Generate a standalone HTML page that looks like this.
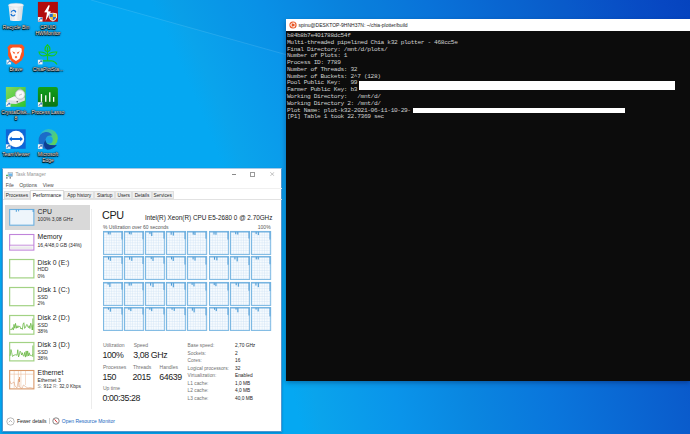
<!DOCTYPE html>
<html><head><meta charset="utf-8">
<style>
*{margin:0;padding:0;box-sizing:border-box}
html,body{width:690px;height:434px;overflow:hidden}
body{position:relative;font-family:"Liberation Sans",sans-serif;
background:radial-gradient(circle farthest-corner at -1592px 856px,#06aaf2 0px,#05a8f2 1941px,#0aa4ec 1961px,#0a94ea 2041px,#0a86e0 2111px,#0a76dc 2191px,#0a5ccc 2320px,#0848c4 2410px,#0644c0 2440px,#0644c0 2700px);}
.a{position:absolute}
.t{position:absolute;white-space:nowrap;line-height:10px}
.tab{background:#f0f0f0;border:0.6px solid #e0e0e0}
.lbl{position:absolute;white-space:nowrap;color:#f4f4f4;font-size:5.0px;text-shadow:0 0.5px 0.5px #000,0 0 0.6px #000,0 0 0.9px #000,0 0 1.2px #000,0 0.6px 1.8px #000;text-align:center;width:34px;line-height:6px}
.mono{position:absolute;font-family:"Liberation Mono",monospace;font-size:6.2px;line-height:6.78px;letter-spacing:-0.37px;color:#d0d0d0;white-space:pre}
</style></head><body>
<div class="a" style="left:0;top:0;width:690px;height:434px"><svg width="690" height="434"><polygon points="0,0 91,0 690,167.7 690,0" fill="rgba(0,40,160,0.04)"/><line x1="91" y1="0" x2="286" y2="54.6" stroke="rgba(200,240,255,0.16)" stroke-width="0.9"/></svg></div>
<svg class="a" style="left:0;top:0" width="70" height="170" viewBox="0 0 70 170">
<defs>
<linearGradient id="cdm" x1="0" y1="0" x2="1" y2="1"><stop offset="0" stop-color="#86d85e"/><stop offset="1" stop-color="#2ec42e"/></linearGradient>
<linearGradient id="pl" x1="0" y1="0" x2="0" y2="1"><stop offset="0" stop-color="#12a01c"/><stop offset="1" stop-color="#0b7412"/></linearGradient>
<linearGradient id="edA" x1="0" y1="0.2" x2="1" y2="0.6"><stop offset="0" stop-color="#2ab4d8"/><stop offset="0.55" stop-color="#3cc4a8"/><stop offset="1" stop-color="#68d448"/></linearGradient>

</defs>
<!-- recycle bin -->
<linearGradient id="rb" x1="0" y1="0" x2="1" y2="0"><stop offset="0" stop-color="#dfe6ec"/><stop offset="0.5" stop-color="#f4f7f9"/><stop offset="1" stop-color="#cfd8df"/></linearGradient>
<path d="M8.5 5.2 L23.4 5.2 L21.6 20.6 Q16 21.6 10.2 20.6 Z" fill="url(#rb)"/>
<ellipse cx="16" cy="5.2" rx="7.6" ry="1.9" fill="#f2f5f7" stroke="#c9d2d9" stroke-width="0.4"/>
<path d="M10.5 8.5 L11.6 19.5 M13.5 8.5 L14 20 M18.5 8.5 L18 20 M21.5 8.5 L20.4 19.5" stroke="#d4dbe1" stroke-width="0.45"/>
<path d="M11.2 12.3 A2.4 2.4 0 0 1 15.6 11.6" fill="none" stroke="#1a74d4" stroke-width="1.1"/>
<path d="M15.2 14.6 A2.4 2.4 0 0 1 11 14.6" fill="none" stroke="#1a74d4" stroke-width="1.1"/>
<path d="M14.2 10.6 L16.4 11.2 L15.4 13 Z M12 15.8 L10.2 14.6 L12.2 13.6 Z" fill="#1a74d4"/>
<!-- HWMonitor -->
<rect x="37.9" y="1.9" width="20" height="19.8" fill="#b20b0b"/>
<path d="M48.5 5.2 L44.2 12.3 L47 12.6 L45.6 20.8 L51 11.4 L48.1 11.2 L49.8 5.5 Z" fill="#fff"/>
<path d="M48.8 13.5 Q52.9 12.2 57 13.5 L57 17.5 Q56 20.5 52.9 21.4 Q49.8 20.5 48.8 17.5 Z" fill="#f0f0f0"/>
<path d="M49.6 14.2 L52.9 13.4 L52.9 17 L49.6 17 Z" fill="#2d6cc8"/>
<path d="M52.9 13.4 L56.2 14.2 L56.2 17 L52.9 17 Z" fill="#f2c230"/>
<path d="M49.6 17 L52.9 17 L52.9 20.6 Q50.3 19.6 49.6 17.5 Z" fill="#f2c230"/>
<path d="M52.9 17 L56.2 17 Q55.5 19.6 52.9 20.6 Z" fill="#2d6cc8"/>
<g transform="translate(37.9,17)"><rect x="0" y="0" width="4.6" height="4.6" fill="#f4f4f4"/><path d="M1 3.8 Q1.2 1.8 3.3 1.6 L2.7 0.9 L3.9 0.9 L3.9 2.2 L3.3 1.7" fill="none" stroke="#1f5fb4" stroke-width="0.8"/></g>
<!-- Brave -->
<path d="M10 44.4 L22 44.4 L23.4 46 L24.6 47.6 L23.8 50.5 L24 55.5 L21.5 60.5 L16 64.4 L10.5 60.5 L8 55.5 L8.2 50.5 L7.4 47.6 L8.6 46 Z" fill="#fb5420"/>
<path d="M10.4 48.6 L12.6 47.4 L19.4 47.4 L21.6 48.6 L21.8 51.5 L20.6 55 L19.5 58.8 L16 61 L12.5 58.8 L11.4 55 L10.2 51.5 Z" fill="#fff"/>
<path d="M12.2 51.2 L15 52.4 L14.2 54.2 Z M19.8 51.2 L17 52.4 L17.8 54.2 Z" fill="#fb5420"/>
<path d="M14.6 57 L16 55.8 L17.4 57 L16 58.6 Z" fill="#fb5420"/>
<path d="M16 48 L16 55" stroke="#fde0d4" stroke-width="0.5"/>
<g transform="translate(6.5,59.8)"><rect x="0" y="0" width="4.6" height="4.6" fill="#f4f4f4"/><path d="M1 3.8 Q1.2 1.8 3.3 1.6 L2.7 0.9 L3.9 0.9 L3.9 2.2 L3.3 1.7" fill="none" stroke="#1f5fb4" stroke-width="0.8"/></g>
<!-- Chia -->
<g fill="none" stroke="#19c81d" stroke-width="1.15">
<path d="M47.5 44.8 Q50 47 50 49.2 Q50 51.4 47.5 51.4 Q45 51.4 45 49.2 Q45 47 47.5 44.8 Z"/>
<path d="M47.5 46.8 L47.5 60.8"/>
<path d="M47 55.4 Q45.5 51.6 39 52 Q39.5 57.2 47 55.4 Z"/>
<path d="M48 55.4 Q49.5 51.6 56.8 52 Q56 57.2 48 55.4 Z"/>
<path d="M42.3 60.8 L51.5 60.8 Q55.5 61.5 57 64.6"/>
</g>
<g transform="translate(37.9,59.8)"><rect x="0" y="0" width="4.6" height="4.6" fill="#f4f4f4"/><path d="M1 3.8 Q1.2 1.8 3.3 1.6 L2.7 0.9 L3.9 0.9 L3.9 2.2 L3.3 1.7" fill="none" stroke="#1f5fb4" stroke-width="0.8"/></g>
<!-- CrystalDiskMark -->
<rect x="5.9" y="87" width="19.8" height="19.8" fill="url(#cdm)"/>
<path d="M6.6 100 L14 96.5 L24.9 97.5 L24.9 100.5 L16 104 L6.6 103.6 Z" fill="#dcdfe2"/>
<path d="M6.6 100 L14 96.5 L24.9 97.5 L16 100.8 Z" fill="#f4f5f6"/>
<circle cx="20.1" cy="94.5" r="4.9" fill="#e6e8ea" stroke="#9aa0a6" stroke-width="0.5"/>
<circle cx="20.1" cy="94.5" r="3.6" fill="#f8f9fa"/>
<path d="M19 95.3 L22 94" stroke="#777" stroke-width="0.4"/>
<rect x="19.4" y="88.6" width="1.3" height="1.2" fill="#b8bcc0"/>
<circle cx="17.2" cy="101.8" r="0.7" fill="#333"/>
<g transform="translate(5.9,102.2)"><rect x="0" y="0" width="4.6" height="4.6" fill="#f4f4f4"/><path d="M1 3.8 Q1.2 1.8 3.3 1.6 L2.7 0.9 L3.9 0.9 L3.9 2.2 L3.3 1.7" fill="none" stroke="#1f5fb4" stroke-width="0.8"/></g>
<!-- Process Lasso -->
<rect x="37.9" y="87" width="20" height="19.8" rx="2" fill="url(#pl)"/>
<rect x="40.8" y="94" width="1.3" height="7.8" fill="#fff"/>
<rect x="45.1" y="95.3" width="1.3" height="6.5" fill="#fff"/>
<rect x="49.1" y="92.3" width="1.3" height="9.5" fill="#fff"/>
<rect x="53" y="97" width="1.3" height="4.8" fill="#fff"/>
<g transform="translate(37.9,102.2)"><rect x="0" y="0" width="4.6" height="4.6" fill="#f4f4f4"/><path d="M1 3.8 Q1.2 1.8 3.3 1.6 L2.7 0.9 L3.9 0.9 L3.9 2.2 L3.3 1.7" fill="none" stroke="#1f5fb4" stroke-width="0.8"/></g>
<!-- TeamViewer -->
<rect x="5.9" y="129.3" width="19.8" height="19.5" fill="#0f66d6"/>
<circle cx="16" cy="139" r="8.2" fill="#fff"/>
<path d="M9 139 L11.8 136.6 L11.8 138 L20.2 138 L20.2 136.6 L23 139 L20.2 141.4 L20.2 140 L11.8 140 L11.8 141.4 Z" fill="#0f66d6"/>
<g transform="translate(5.9,144.3)"><rect x="0" y="0" width="4.6" height="4.6" fill="#f4f4f4"/><path d="M1 3.8 Q1.2 1.8 3.3 1.6 L2.7 0.9 L3.9 0.9 L3.9 2.2 L3.3 1.7" fill="none" stroke="#1f5fb4" stroke-width="0.8"/></g>
<!-- Edge -->
<circle cx="48.6" cy="138.2" r="9.2" fill="url(#edA)"/>
<circle cx="49.2" cy="139.8" r="3.6" fill="#1aa2e6"/>
<path d="M38.6 141.5 Q38.4 132.8 45.5 132 Q50.5 131.6 52 135.6 Q46.2 135 45.5 140 Q45.6 146.4 56.8 145 Q53 149.6 47.2 149.4 Q39 148.6 38.6 141.5 Z" fill="#1b6cc9"/>
<path d="M45.5 140 Q45.6 146.4 56.8 145 Q53 149.6 47.2 149.4 Q43.6 148 44 143 Z" fill="#0d3f92"/>
<g transform="translate(37.9,144.3)"><rect x="0" y="0" width="4.6" height="4.6" fill="#f4f4f4"/><path d="M1 3.8 Q1.2 1.8 3.3 1.6 L2.7 0.9 L3.9 0.9 L3.9 2.2 L3.3 1.7" fill="none" stroke="#1f5fb4" stroke-width="0.8"/></g>
</svg>

<div class="lbl" style="left:-1px;top:24px">Recycle Bin</div>
<div class="lbl" style="left:31px;top:24px">CPUID<br>HWMonitor</div>
<div class="lbl" style="left:-1px;top:66px">Brave</div>
<div class="lbl" style="left:31px;top:66px">ChiaPlotSta...</div>
<div class="lbl" style="left:-1px;top:109px">CrystalDisk...<br>8</div>
<div class="lbl" style="left:31px;top:109px">Process Lasso</div>
<div class="lbl" style="left:-1px;top:151px">TeamViewer</div>
<div class="lbl" style="left:31px;top:151px">Microsoft<br>Edge</div>
<div class="a" style="left:286px;top:18.6px;width:404px;height:362.3px;background:#0c0c0c;box-shadow:0 1.5px 5px rgba(0,0,40,0.35)"></div>
<div class="a" style="left:286px;top:18.6px;width:404px;height:12.8px;background:#fff"></div>
<svg class="a" style="left:289px;top:21px" width="8" height="8" viewBox="0 0 8 8"><circle cx="4" cy="4" r="3.6" fill="#e95420"/><circle cx="4" cy="4" r="2.1" fill="none" stroke="#fff" stroke-width="0.8"/><circle cx="2" cy="4" r="0.7" fill="#fff"/><circle cx="5" cy="2.3" r="0.7" fill="#fff"/><circle cx="5" cy="5.7" r="0.7" fill="#fff"/></svg>
<div class="t" style="left:298.6px;top:20.00px;font-size:5.0px;color:#1a1a1a;">spinu@DESKTOP-9HNH37N: ~/chia-plotter/build</div>
<div class="mono" style="left:287px;top:33.0px">b84b8b7e401788dc54f
Multi-threaded pipelined Chia k32 plotter - 468cc5e
Final Directory: /mnt/d/plots/
Number of Plots: 1
Process ID: 7789
Number of Threads: 32
Number of Buckets: 2^7 (128)
Pool Public Key:   99
Farmer Public Key: b3
Working Directory:   /mnt/d/
Working Directory 2: /mnt/d/
Plot Name: plot-k32-2021-06-11-10-29-
[P1] Table 1 took 22.7369 sec</div>
<div class="a" style="left:359.2px;top:81.3px;width:316px;height:8.8px;background:#fff"></div>
<div class="a" style="left:413.2px;top:108.2px;width:212px;height:4.5px;background:#fff"></div>
<div class="a" style="left:2.4px;top:167.6px;width:280px;height:264.4px;background:#fff;border:0.7px solid #4f96cf;border-top:0.8px solid #a9c9e6;box-shadow:0 1px 2px rgba(0,50,110,0.35)"></div>
<svg class="a" style="left:5px;top:171.5px" width="9" height="8" viewBox="0 0 9 8"><rect x="3.1" y="0.7" width="4.6" height="4" fill="#cfe6f7" stroke="#9aa0a6" stroke-width="0.5"/><rect x="3.6" y="1.6" width="3.6" height="2.4" fill="#6fb6ea"/><rect x="1" y="2.8" width="2.2" height="1.1" fill="#4ea84e"/><rect x="1.1" y="4.7" width="1.5" height="2" fill="#8c9297"/><rect x="4.5" y="4.7" width="1.5" height="2" fill="#8c9297"/></svg>
<div class="t" style="left:15.4px;top:170.00px;font-size:4.85px;color:#959595;">Task Manager</div>
<div class="a" style="left:231.6px;top:174.3px;width:4.4px;height:0.55px;background:#8a8a8a"></div>
<div class="a" style="left:250.3px;top:172.4px;width:4.6px;height:4.3px;border:0.55px solid #9a9a9a"></div>
<svg class="a" style="left:270px;top:172.3px" width="4.5" height="4.2" viewBox="0 0 4.5 4.2"><path d="M0.2 0.2L4.3 4M4.3 0.2L0.2 4" stroke="#8a8a8a" stroke-width="0.5"/></svg>
<div class="t" style="left:5.8px;top:180.20px;font-size:5.0px;color:#4a4a4a;">File</div>
<div class="t" style="left:19.3px;top:180.20px;font-size:5.2px;color:#4a4a4a;">Options</div>
<div class="t" style="left:42.8px;top:180.20px;font-size:5.0px;color:#4a4a4a;">View</div>
<div class="a" style="left:3px;top:188.3px;width:279px;height:0.8px;background:#f0f0f0"></div>
<div class="a" style="left:3px;top:198.9px;width:279px;height:0.7px;background:#e2e2e2"></div>
<div class="a tab" style="left:4.0px;top:191.3px;width:25.8px;height:8.2px"></div>
<div class="t" style="left:4.0px;top:191.40px;font-size:4.8px;color:#262626;width:25.8px;text-align:center">Processes</div>
<div class="a tab" style="left:64.2px;top:191.3px;width:30.0px;height:8.2px"></div>
<div class="t" style="left:64.2px;top:191.40px;font-size:4.8px;color:#262626;width:30.0px;text-align:center">App history</div>
<div class="a tab" style="left:94.2px;top:191.3px;width:21.0px;height:8.2px"></div>
<div class="t" style="left:94.2px;top:191.40px;font-size:4.8px;color:#262626;width:21.0px;text-align:center">Startup</div>
<div class="a tab" style="left:115.2px;top:191.3px;width:17.0px;height:8.2px"></div>
<div class="t" style="left:115.2px;top:191.40px;font-size:4.8px;color:#262626;width:17.0px;text-align:center">Users</div>
<div class="a tab" style="left:132.2px;top:191.3px;width:19.6px;height:8.2px"></div>
<div class="t" style="left:132.2px;top:191.40px;font-size:4.8px;color:#262626;width:19.6px;text-align:center">Details</div>
<div class="a tab" style="left:151.8px;top:191.3px;width:21.8px;height:8.2px"></div>
<div class="t" style="left:151.8px;top:191.40px;font-size:4.8px;color:#262626;width:21.8px;text-align:center">Services</div>
<div class="a" style="left:29.6px;top:190.4px;width:34.8px;height:9.4px;background:#fff;border:0.6px solid #dadada;border-bottom:none"></div>
<div class="t" style="left:29.6px;top:190.20px;font-size:5.0px;color:#1a1a1a;width:34.8px;text-align:center">Performance</div>
<div class="a" style="left:91.2px;top:208.5px;width:0.7px;height:200px;background:#ececec"></div>
<div class="a" style="left:5.2px;top:205.1px;width:84.8px;height:24.5px;background:#d9d9d9"></div>
<svg class="a" style="left:8.6px;top:209.1px;overflow:visible" width="25.2" height="16.60" viewBox="0 0 25.2 16.60"><rect x="0.65" y="0.5" width="24.25" height="15.70" fill="#eef5fb" stroke="#6cb0e0" stroke-width="1.1"/><rect x="6.8" y="0.4" width="1.1" height="2.4" fill="#5aa6dc"/><rect x="9.1" y="0.4" width="1.0" height="2.0" fill="#5aa6dc"/><rect x="23.6" y="0.4" width="1.2" height="2.6" fill="#5aa6dc"/></svg>
<div class="t" style="left:37.6px;top:206.80px;font-size:6.8px;color:#1b1b1b;">CPU</div>
<div class="t" style="left:37.6px;top:214.30px;font-size:5.0px;color:#2a2a2a;">100% 3,08 GHz</div>
<svg class="a" style="left:8.6px;top:234.1px;overflow:visible" width="25.2" height="16.50" viewBox="0 0 25.2 16.50"><rect x="0.65" y="0.5" width="24.25" height="15.60" fill="#fff" stroke="#c084da" stroke-width="1.1"/><line x1="0.45" y1="11.2" x2="24.75" y2="11.2" stroke="#b874d2" stroke-width="0.8"/><rect x="1.6" y="12.4" width="22.0" height="2.6" fill="#ececec"/></svg>
<div class="t" style="left:37.6px;top:232.10px;font-size:6.8px;color:#1b1b1b;">Memory</div>
<div class="t" style="left:37.6px;top:239.70px;font-size:5.0px;color:#2a2a2a;">16,4/48,0 GB (34%)</div>
<svg class="a" style="left:8.6px;top:259.2px;overflow:visible" width="25.2" height="19.30" viewBox="0 0 25.2 19.30"><rect x="0.65" y="0.5" width="24.25" height="18.40" fill="#fff" stroke="#a2d284" stroke-width="1.2"/></svg>
<div class="t" style="left:37.6px;top:257.60px;font-size:6.8px;color:#1b1b1b;">Disk 0 (E:)</div>
<div class="t" style="left:37.6px;top:264.40px;font-size:5.0px;color:#2a2a2a;">HDD</div>
<div class="t" style="left:37.6px;top:270.50px;font-size:5.0px;color:#2a2a2a;">0%</div>
<svg class="a" style="left:8.6px;top:287.2px;overflow:visible" width="25.2" height="19.10" viewBox="0 0 25.2 19.10"><rect x="0.65" y="0.5" width="24.25" height="18.20" fill="#fff" stroke="#a2d284" stroke-width="1.2"/></svg>
<div class="t" style="left:37.6px;top:285.20px;font-size:6.8px;color:#1b1b1b;">Disk 1 (C:)</div>
<div class="t" style="left:37.6px;top:292.10px;font-size:5.0px;color:#2a2a2a;">SSD</div>
<div class="t" style="left:37.6px;top:298.20px;font-size:5.0px;color:#2a2a2a;">2%</div>
<svg class="a" style="left:8.6px;top:314.8px;overflow:visible" width="25.2" height="19.60" viewBox="0 0 25.2 19.60"><rect x="0.65" y="0.5" width="24.25" height="18.70" fill="#fff" stroke="#a2d284" stroke-width="1.2"/><polyline points="1.20,14.22 1.96,14.67 2.72,14.52 3.48,12.68 4.24,15.05 5.00,9.38 5.76,13.24 6.52,8.37 7.28,13.33 8.04,10.69 8.80,12.96 9.56,10.99 10.32,11.43 11.08,11.35 11.84,14.00 12.60,13.13 13.36,14.40 14.12,8.94 14.88,7.76 15.64,13.38 16.40,12.61 17.16,10.77 17.92,9.42 18.68,11.40 19.44,12.66 20.20,10.65 20.96,13.55 21.72,8.22 22.48,10.52 23.24,15.02 24.00,9.60" fill="none" stroke="#5cb032" stroke-width="0.7"/><line x1="23.8" y1="3.5" x2="23.8" y2="15" stroke="#5cb032" stroke-width="0.7"/></svg>
<div class="t" style="left:37.6px;top:312.70px;font-size:6.8px;color:#1b1b1b;">Disk 2 (D:)</div>
<div class="t" style="left:37.6px;top:319.80px;font-size:5.0px;color:#2a2a2a;">SSD</div>
<div class="t" style="left:37.6px;top:326.00px;font-size:5.0px;color:#2a2a2a;">38%</div>
<svg class="a" style="left:8.6px;top:342.3px;overflow:visible" width="25.2" height="19.30" viewBox="0 0 25.2 19.30"><rect x="0.65" y="0.5" width="24.25" height="18.40" fill="#fff" stroke="#a2d284" stroke-width="1.2"/><polyline points="1.20,13.83 1.96,7.54 2.72,10.74 3.48,14.40 4.24,14.05 5.00,12.98 5.76,13.02 6.52,12.75 7.28,12.79 8.04,13.48 8.80,7.74 9.56,14.98 10.32,12.84 11.08,9.19 11.84,9.99 12.60,13.03 13.36,10.76 14.12,13.64 14.88,14.15 15.64,10.41 16.40,15.12 17.16,8.95 17.92,14.39 18.68,8.95 19.44,13.93 20.20,10.79 20.96,13.72 21.72,13.18 22.48,13.61 23.24,12.87 24.00,13.06" fill="none" stroke="#5cb032" stroke-width="0.7"/><line x1="23.8" y1="3.5" x2="23.8" y2="15" stroke="#5cb032" stroke-width="0.7"/></svg>
<div class="t" style="left:37.6px;top:340.20px;font-size:6.8px;color:#1b1b1b;">Disk 3 (D:)</div>
<div class="t" style="left:37.6px;top:347.30px;font-size:5.0px;color:#2a2a2a;">SSD</div>
<div class="t" style="left:37.6px;top:353.40px;font-size:5.0px;color:#2a2a2a;">38%</div>
<svg class="a" style="left:8.6px;top:370.2px;overflow:visible" width="25.2" height="19.30" viewBox="0 0 25.2 19.30"><rect x="0.65" y="0.5" width="24.25" height="18.40" fill="#fff" stroke="#d99868" stroke-width="1.1"/><line x1="0.45" y1="4.2" x2="24.75" y2="4.2" stroke="#e8b08a" stroke-width="0.5"/><line x1="5.2" y1="0.9" x2="5.2" y2="18" stroke="#eab894" stroke-width="0.5"/><line x1="9.4" y1="0.9" x2="9.4" y2="17" stroke="#eab894" stroke-width="0.5"/><line x1="11.9" y1="0.9" x2="11.9" y2="17.5" stroke="#eab894" stroke-width="0.5"/><line x1="16.5" y1="0.9" x2="16.5" y2="15" stroke="#eab894" stroke-width="0.5"/><polyline points="0.9,11 2,14 3.5,13 5,12 6,16 8,18 9.6,9 10.4,17 13,18.5 14.5,15 17,17 19,18 21,17.5 24.3,18.4" fill="none" stroke="#d9936a" stroke-width="0.5"/><rect x="10" y="7" width="0.9" height="5" fill="#e49a6c"/></svg>
<div class="t" style="left:37.6px;top:368.10px;font-size:6.8px;color:#1b1b1b;">Ethernet</div>
<div class="t" style="left:37.6px;top:375.10px;font-size:5.0px;color:#2a2a2a;">Ethernet 3</div>
<div class="t" style="left:37.6px;top:381.80px;font-size:4.85px;color:#2a2a2a;"><span style="color:#888">S:</span> 912 <span style="color:#888">R:</span> 32,0 Kbps</div>
<div class="t" style="left:102.0px;top:210.00px;font-size:10.8px;color:#202020;letter-spacing:-0.35px">CPU</div>
<div class="t" style="left:145.0px;top:212.60px;font-size:6.35px;color:#1b1b1b;">Intel(R) Xeon(R) CPU E5-2680 0 @ 2.70GHz</div>
<div class="t" style="left:103.0px;top:222.10px;font-size:5.0px;color:#555555;">% Utilization over 60 seconds</div>
<div class="t" style="left:250px;top:222.10px;font-size:5.0px;color:#555555;width:20.6px;text-align:right">100%</div>
<svg class="a" style="left:0;top:0" width="690" height="434" viewBox="0 0 690 434"><defs><pattern id="grid" width="2.45" height="2.6" patternUnits="userSpaceOnUse" x="0.4" y="0.6"><path d="M0 0H2.45M0 0V2.6" fill="none" stroke="#cde2f4" stroke-width="0.8"/></pattern></defs><g transform="translate(103.50,231.40)"><rect x="0" y="0" width="19.2" height="23.0" fill="#f7fbfe"/><rect x="0" y="0" width="19.2" height="23.0" fill="url(#grid)"/><rect x="4.25" y="0" width="1.1" height="2.98" fill="#4a98d4"/><rect x="5.97" y="0" width="1.3" height="3.14" fill="#5ea6da"/><rect x="18.00" y="0" width="1.2" height="8.07" fill="#4a98d4"/><line x1="0" y1="0.5" x2="19.2" y2="0.5" stroke="#5aa2d8" stroke-width="0.9"/><rect x="0" y="0" width="19.2" height="23.0" fill="none" stroke="#70b2e0" stroke-width="0.9"/></g><g transform="translate(124.50,231.40)"><rect x="0" y="0" width="19.2" height="23.0" fill="#f7fbfe"/><rect x="0" y="0" width="19.2" height="23.0" fill="url(#grid)"/><rect x="4.31" y="0" width="1.1" height="2.81" fill="#4a98d4"/><rect x="5.96" y="0" width="1.3" height="3.07" fill="#5ea6da"/><rect x="18.00" y="0" width="1.2" height="7.87" fill="#4a98d4"/><line x1="0" y1="0.5" x2="19.2" y2="0.5" stroke="#5aa2d8" stroke-width="0.9"/><rect x="0" y="0" width="19.2" height="23.0" fill="none" stroke="#70b2e0" stroke-width="0.9"/></g><g transform="translate(145.50,231.40)"><rect x="0" y="0" width="19.2" height="23.0" fill="#f7fbfe"/><rect x="0" y="0" width="19.2" height="23.0" fill="url(#grid)"/><rect x="3.90" y="0" width="1.1" height="2.71" fill="#4a98d4"/><rect x="5.57" y="0" width="1.3" height="4.65" fill="#5ea6da"/><rect x="18.00" y="0" width="1.2" height="7.25" fill="#4a98d4"/><line x1="0" y1="0.5" x2="19.2" y2="0.5" stroke="#5aa2d8" stroke-width="0.9"/><rect x="0" y="0" width="19.2" height="23.0" fill="none" stroke="#70b2e0" stroke-width="0.9"/></g><g transform="translate(166.50,231.40)"><rect x="0" y="0" width="19.2" height="23.0" fill="#f7fbfe"/><rect x="0" y="0" width="19.2" height="23.0" fill="url(#grid)"/><rect x="4.11" y="0" width="1.1" height="3.34" fill="#4a98d4"/><rect x="6.21" y="0" width="1.3" height="4.15" fill="#5ea6da"/><rect x="18.00" y="0" width="1.2" height="7.79" fill="#4a98d4"/><line x1="0" y1="0.5" x2="19.2" y2="0.5" stroke="#5aa2d8" stroke-width="0.9"/><rect x="0" y="0" width="19.2" height="23.0" fill="none" stroke="#70b2e0" stroke-width="0.9"/></g><g transform="translate(187.50,231.40)"><rect x="0" y="0" width="19.2" height="23.0" fill="#f7fbfe"/><rect x="0" y="0" width="19.2" height="23.0" fill="url(#grid)"/><rect x="5.17" y="0" width="1.1" height="3.23" fill="#4a98d4"/><rect x="6.80" y="0" width="1.3" height="3.58" fill="#5ea6da"/><rect x="18.00" y="0" width="1.2" height="7.29" fill="#4a98d4"/><line x1="0" y1="0.5" x2="19.2" y2="0.5" stroke="#5aa2d8" stroke-width="0.9"/><rect x="0" y="0" width="19.2" height="23.0" fill="none" stroke="#70b2e0" stroke-width="0.9"/></g><g transform="translate(209.50,231.40)"><rect x="0" y="0" width="19.2" height="23.0" fill="#f7fbfe"/><rect x="0" y="0" width="19.2" height="23.0" fill="url(#grid)"/><rect x="3.96" y="0" width="1.1" height="3.18" fill="#4a98d4"/><rect x="5.81" y="0" width="1.3" height="3.36" fill="#5ea6da"/><rect x="18.00" y="0" width="1.2" height="8.16" fill="#4a98d4"/><line x1="0" y1="0.5" x2="19.2" y2="0.5" stroke="#5aa2d8" stroke-width="0.9"/><rect x="0" y="0" width="19.2" height="23.0" fill="none" stroke="#70b2e0" stroke-width="0.9"/></g><g transform="translate(230.50,231.40)"><rect x="0" y="0" width="19.2" height="23.0" fill="#f7fbfe"/><rect x="0" y="0" width="19.2" height="23.0" fill="url(#grid)"/><rect x="4.69" y="0" width="1.1" height="2.86" fill="#4a98d4"/><rect x="6.59" y="0" width="1.3" height="3.13" fill="#5ea6da"/><rect x="18.00" y="0" width="1.2" height="7.12" fill="#4a98d4"/><line x1="0" y1="0.5" x2="19.2" y2="0.5" stroke="#5aa2d8" stroke-width="0.9"/><rect x="0" y="0" width="19.2" height="23.0" fill="none" stroke="#70b2e0" stroke-width="0.9"/></g><g transform="translate(251.50,231.40)"><rect x="0" y="0" width="19.2" height="23.0" fill="#f7fbfe"/><rect x="0" y="0" width="19.2" height="23.0" fill="url(#grid)"/><rect x="4.09" y="0" width="1.1" height="2.71" fill="#4a98d4"/><rect x="6.23" y="0" width="1.3" height="3.63" fill="#5ea6da"/><rect x="18.00" y="0" width="1.2" height="8.17" fill="#4a98d4"/><line x1="0" y1="0.5" x2="19.2" y2="0.5" stroke="#5aa2d8" stroke-width="0.9"/><rect x="0" y="0" width="19.2" height="23.0" fill="none" stroke="#70b2e0" stroke-width="0.9"/></g><g transform="translate(103.50,256.40)"><rect x="0" y="0" width="19.2" height="23.0" fill="#f7fbfe"/><rect x="0" y="0" width="19.2" height="23.0" fill="url(#grid)"/><rect x="4.43" y="0" width="1.1" height="3.15" fill="#4a98d4"/><rect x="6.27" y="0" width="1.3" height="4.40" fill="#5ea6da"/><rect x="18.00" y="0" width="1.2" height="7.49" fill="#4a98d4"/><line x1="0" y1="0.5" x2="19.2" y2="0.5" stroke="#5aa2d8" stroke-width="0.9"/><rect x="0" y="0" width="19.2" height="23.0" fill="none" stroke="#70b2e0" stroke-width="0.9"/></g><g transform="translate(124.50,256.40)"><rect x="0" y="0" width="19.2" height="23.0" fill="#f7fbfe"/><rect x="0" y="0" width="19.2" height="23.0" fill="url(#grid)"/><rect x="4.60" y="0" width="1.1" height="3.25" fill="#4a98d4"/><rect x="6.62" y="0" width="1.3" height="4.46" fill="#5ea6da"/><rect x="18.00" y="0" width="1.2" height="7.58" fill="#4a98d4"/><line x1="0" y1="0.5" x2="19.2" y2="0.5" stroke="#5aa2d8" stroke-width="0.9"/><rect x="0" y="0" width="19.2" height="23.0" fill="none" stroke="#70b2e0" stroke-width="0.9"/></g><g transform="translate(145.50,256.40)"><rect x="0" y="0" width="19.2" height="23.0" fill="#f7fbfe"/><rect x="0" y="0" width="19.2" height="23.0" fill="url(#grid)"/><rect x="5.17" y="0" width="1.1" height="2.70" fill="#4a98d4"/><rect x="6.87" y="0" width="1.3" height="4.51" fill="#5ea6da"/><rect x="18.00" y="0" width="1.2" height="7.30" fill="#4a98d4"/><line x1="0" y1="0.5" x2="19.2" y2="0.5" stroke="#5aa2d8" stroke-width="0.9"/><rect x="0" y="0" width="19.2" height="23.0" fill="none" stroke="#70b2e0" stroke-width="0.9"/></g><g transform="translate(166.50,256.40)"><rect x="0" y="0" width="19.2" height="23.0" fill="#f7fbfe"/><rect x="0" y="0" width="19.2" height="23.0" fill="url(#grid)"/><rect x="4.48" y="0" width="1.1" height="3.00" fill="#4a98d4"/><rect x="6.12" y="0" width="1.3" height="4.53" fill="#5ea6da"/><rect x="18.00" y="0" width="1.2" height="8.15" fill="#4a98d4"/><line x1="0" y1="0.5" x2="19.2" y2="0.5" stroke="#5aa2d8" stroke-width="0.9"/><rect x="0" y="0" width="19.2" height="23.0" fill="none" stroke="#70b2e0" stroke-width="0.9"/></g><g transform="translate(187.50,256.40)"><rect x="0" y="0" width="19.2" height="23.0" fill="#f7fbfe"/><rect x="0" y="0" width="19.2" height="23.0" fill="url(#grid)"/><rect x="5.03" y="0" width="1.1" height="3.03" fill="#4a98d4"/><rect x="6.88" y="0" width="1.3" height="4.19" fill="#5ea6da"/><rect x="18.00" y="0" width="1.2" height="8.16" fill="#4a98d4"/><line x1="0" y1="0.5" x2="19.2" y2="0.5" stroke="#5aa2d8" stroke-width="0.9"/><rect x="0" y="0" width="19.2" height="23.0" fill="none" stroke="#70b2e0" stroke-width="0.9"/></g><g transform="translate(209.50,256.40)"><rect x="0" y="0" width="19.2" height="23.0" fill="#f7fbfe"/><rect x="0" y="0" width="19.2" height="23.0" fill="url(#grid)"/><rect x="4.44" y="0" width="1.1" height="3.33" fill="#4a98d4"/><rect x="6.71" y="0" width="1.3" height="3.95" fill="#5ea6da"/><rect x="18.00" y="0" width="1.2" height="8.33" fill="#4a98d4"/><line x1="0" y1="0.5" x2="19.2" y2="0.5" stroke="#5aa2d8" stroke-width="0.9"/><rect x="0" y="0" width="19.2" height="23.0" fill="none" stroke="#70b2e0" stroke-width="0.9"/></g><g transform="translate(230.50,256.40)"><rect x="0" y="0" width="19.2" height="23.0" fill="#f7fbfe"/><rect x="0" y="0" width="19.2" height="23.0" fill="url(#grid)"/><rect x="3.88" y="0" width="1.1" height="2.98" fill="#4a98d4"/><rect x="6.05" y="0" width="1.3" height="4.99" fill="#5ea6da"/><rect x="18.00" y="0" width="1.2" height="8.64" fill="#4a98d4"/><line x1="0" y1="0.5" x2="19.2" y2="0.5" stroke="#5aa2d8" stroke-width="0.9"/><rect x="0" y="0" width="19.2" height="23.0" fill="none" stroke="#70b2e0" stroke-width="0.9"/></g><g transform="translate(251.50,256.40)"><rect x="0" y="0" width="19.2" height="23.0" fill="#f7fbfe"/><rect x="0" y="0" width="19.2" height="23.0" fill="url(#grid)"/><rect x="4.20" y="0" width="1.1" height="3.00" fill="#4a98d4"/><rect x="6.11" y="0" width="1.3" height="3.05" fill="#5ea6da"/><rect x="18.00" y="0" width="1.2" height="7.92" fill="#4a98d4"/><line x1="0" y1="0.5" x2="19.2" y2="0.5" stroke="#5aa2d8" stroke-width="0.9"/><rect x="0" y="0" width="19.2" height="23.0" fill="none" stroke="#70b2e0" stroke-width="0.9"/></g><g transform="translate(103.50,282.40)"><rect x="0" y="0" width="19.2" height="23.0" fill="#f7fbfe"/><rect x="0" y="0" width="19.2" height="23.0" fill="url(#grid)"/><rect x="4.04" y="0" width="1.1" height="2.27" fill="#4a98d4"/><rect x="5.73" y="0" width="1.3" height="4.54" fill="#5ea6da"/><rect x="18.00" y="0" width="1.2" height="7.26" fill="#4a98d4"/><line x1="0" y1="0.5" x2="19.2" y2="0.5" stroke="#5aa2d8" stroke-width="0.9"/><rect x="0" y="0" width="19.2" height="23.0" fill="none" stroke="#70b2e0" stroke-width="0.9"/></g><g transform="translate(124.50,282.40)"><rect x="0" y="0" width="19.2" height="23.0" fill="#f7fbfe"/><rect x="0" y="0" width="19.2" height="23.0" fill="url(#grid)"/><rect x="4.15" y="0" width="1.1" height="3.25" fill="#4a98d4"/><rect x="6.06" y="0" width="1.3" height="3.16" fill="#5ea6da"/><rect x="18.00" y="0" width="1.2" height="7.90" fill="#4a98d4"/><line x1="0" y1="0.5" x2="19.2" y2="0.5" stroke="#5aa2d8" stroke-width="0.9"/><rect x="0" y="0" width="19.2" height="23.0" fill="none" stroke="#70b2e0" stroke-width="0.9"/></g><g transform="translate(145.50,282.40)"><rect x="0" y="0" width="19.2" height="23.0" fill="#f7fbfe"/><rect x="0" y="0" width="19.2" height="23.0" fill="url(#grid)"/><rect x="4.57" y="0" width="1.1" height="3.18" fill="#4a98d4"/><rect x="6.88" y="0" width="1.3" height="4.73" fill="#5ea6da"/><rect x="18.00" y="0" width="1.2" height="7.56" fill="#4a98d4"/><line x1="0" y1="0.5" x2="19.2" y2="0.5" stroke="#5aa2d8" stroke-width="0.9"/><rect x="0" y="0" width="19.2" height="23.0" fill="none" stroke="#70b2e0" stroke-width="0.9"/></g><g transform="translate(166.50,282.40)"><rect x="0" y="0" width="19.2" height="23.0" fill="#f7fbfe"/><rect x="0" y="0" width="19.2" height="23.0" fill="url(#grid)"/><rect x="4.38" y="0" width="1.1" height="3.26" fill="#4a98d4"/><rect x="6.27" y="0" width="1.3" height="4.92" fill="#5ea6da"/><rect x="18.00" y="0" width="1.2" height="7.30" fill="#4a98d4"/><line x1="0" y1="0.5" x2="19.2" y2="0.5" stroke="#5aa2d8" stroke-width="0.9"/><rect x="0" y="0" width="19.2" height="23.0" fill="none" stroke="#70b2e0" stroke-width="0.9"/></g><g transform="translate(187.50,282.40)"><rect x="0" y="0" width="19.2" height="23.0" fill="#f7fbfe"/><rect x="0" y="0" width="19.2" height="23.0" fill="url(#grid)"/><rect x="4.05" y="0" width="1.1" height="2.48" fill="#4a98d4"/><rect x="5.83" y="0" width="1.3" height="3.97" fill="#5ea6da"/><rect x="18.00" y="0" width="1.2" height="8.18" fill="#4a98d4"/><line x1="0" y1="0.5" x2="19.2" y2="0.5" stroke="#5aa2d8" stroke-width="0.9"/><rect x="0" y="0" width="19.2" height="23.0" fill="none" stroke="#70b2e0" stroke-width="0.9"/></g><g transform="translate(209.50,282.40)"><rect x="0" y="0" width="19.2" height="23.0" fill="#f7fbfe"/><rect x="0" y="0" width="19.2" height="23.0" fill="url(#grid)"/><rect x="4.17" y="0" width="1.1" height="2.70" fill="#4a98d4"/><rect x="5.77" y="0" width="1.3" height="3.74" fill="#5ea6da"/><rect x="18.00" y="0" width="1.2" height="8.13" fill="#4a98d4"/><line x1="0" y1="0.5" x2="19.2" y2="0.5" stroke="#5aa2d8" stroke-width="0.9"/><rect x="0" y="0" width="19.2" height="23.0" fill="none" stroke="#70b2e0" stroke-width="0.9"/></g><g transform="translate(230.50,282.40)"><rect x="0" y="0" width="19.2" height="23.0" fill="#f7fbfe"/><rect x="0" y="0" width="19.2" height="23.0" fill="url(#grid)"/><rect x="5.13" y="0" width="1.1" height="2.82" fill="#4a98d4"/><rect x="7.29" y="0" width="1.3" height="4.24" fill="#5ea6da"/><rect x="18.00" y="0" width="1.2" height="8.35" fill="#4a98d4"/><line x1="0" y1="0.5" x2="19.2" y2="0.5" stroke="#5aa2d8" stroke-width="0.9"/><rect x="0" y="0" width="19.2" height="23.0" fill="none" stroke="#70b2e0" stroke-width="0.9"/></g><g transform="translate(251.50,282.40)"><rect x="0" y="0" width="19.2" height="23.0" fill="#f7fbfe"/><rect x="0" y="0" width="19.2" height="23.0" fill="url(#grid)"/><rect x="3.88" y="0" width="1.1" height="3.14" fill="#4a98d4"/><rect x="6.20" y="0" width="1.3" height="4.75" fill="#5ea6da"/><rect x="18.00" y="0" width="1.2" height="8.60" fill="#4a98d4"/><line x1="0" y1="0.5" x2="19.2" y2="0.5" stroke="#5aa2d8" stroke-width="0.9"/><rect x="0" y="0" width="19.2" height="23.0" fill="none" stroke="#70b2e0" stroke-width="0.9"/></g><g transform="translate(103.50,307.40)"><rect x="0" y="0" width="19.2" height="23.0" fill="#f7fbfe"/><rect x="0" y="0" width="19.2" height="23.0" fill="url(#grid)"/><rect x="4.35" y="0" width="1.1" height="2.32" fill="#4a98d4"/><rect x="6.27" y="0" width="1.3" height="4.27" fill="#5ea6da"/><rect x="18.00" y="0" width="1.2" height="7.12" fill="#4a98d4"/><line x1="0" y1="0.5" x2="19.2" y2="0.5" stroke="#5aa2d8" stroke-width="0.9"/><rect x="0" y="0" width="19.2" height="23.0" fill="none" stroke="#70b2e0" stroke-width="0.9"/></g><g transform="translate(124.50,307.40)"><rect x="0" y="0" width="19.2" height="23.0" fill="#f7fbfe"/><rect x="0" y="0" width="19.2" height="23.0" fill="url(#grid)"/><rect x="3.89" y="0" width="1.1" height="2.39" fill="#4a98d4"/><rect x="5.66" y="0" width="1.3" height="3.68" fill="#5ea6da"/><rect x="18.00" y="0" width="1.2" height="7.11" fill="#4a98d4"/><line x1="0" y1="0.5" x2="19.2" y2="0.5" stroke="#5aa2d8" stroke-width="0.9"/><rect x="0" y="0" width="19.2" height="23.0" fill="none" stroke="#70b2e0" stroke-width="0.9"/></g><g transform="translate(145.50,307.40)"><rect x="0" y="0" width="19.2" height="23.0" fill="#f7fbfe"/><rect x="0" y="0" width="19.2" height="23.0" fill="url(#grid)"/><rect x="3.80" y="0" width="1.1" height="2.32" fill="#4a98d4"/><rect x="5.52" y="0" width="1.3" height="3.73" fill="#5ea6da"/><rect x="18.00" y="0" width="1.2" height="7.05" fill="#4a98d4"/><line x1="0" y1="0.5" x2="19.2" y2="0.5" stroke="#5aa2d8" stroke-width="0.9"/><rect x="0" y="0" width="19.2" height="23.0" fill="none" stroke="#70b2e0" stroke-width="0.9"/></g><g transform="translate(166.50,307.40)"><rect x="0" y="0" width="19.2" height="23.0" fill="#f7fbfe"/><rect x="0" y="0" width="19.2" height="23.0" fill="url(#grid)"/><rect x="5.02" y="0" width="1.1" height="2.38" fill="#4a98d4"/><rect x="7.12" y="0" width="1.3" height="3.50" fill="#5ea6da"/><rect x="18.00" y="0" width="1.2" height="7.69" fill="#4a98d4"/><line x1="0" y1="0.5" x2="19.2" y2="0.5" stroke="#5aa2d8" stroke-width="0.9"/><rect x="0" y="0" width="19.2" height="23.0" fill="none" stroke="#70b2e0" stroke-width="0.9"/></g><g transform="translate(187.50,307.40)"><rect x="0" y="0" width="19.2" height="23.0" fill="#f7fbfe"/><rect x="0" y="0" width="19.2" height="23.0" fill="url(#grid)"/><rect x="4.31" y="0" width="1.1" height="3.22" fill="#4a98d4"/><rect x="6.01" y="0" width="1.3" height="4.99" fill="#5ea6da"/><rect x="18.00" y="0" width="1.2" height="7.93" fill="#4a98d4"/><line x1="0" y1="0.5" x2="19.2" y2="0.5" stroke="#5aa2d8" stroke-width="0.9"/><rect x="0" y="0" width="19.2" height="23.0" fill="none" stroke="#70b2e0" stroke-width="0.9"/></g><g transform="translate(209.50,307.40)"><rect x="0" y="0" width="19.2" height="23.0" fill="#f7fbfe"/><rect x="0" y="0" width="19.2" height="23.0" fill="url(#grid)"/><rect x="4.48" y="0" width="1.1" height="2.32" fill="#4a98d4"/><rect x="6.15" y="0" width="1.3" height="3.69" fill="#5ea6da"/><rect x="18.00" y="0" width="1.2" height="7.53" fill="#4a98d4"/><line x1="0" y1="0.5" x2="19.2" y2="0.5" stroke="#5aa2d8" stroke-width="0.9"/><rect x="0" y="0" width="19.2" height="23.0" fill="none" stroke="#70b2e0" stroke-width="0.9"/></g><g transform="translate(230.50,307.40)"><rect x="0" y="0" width="19.2" height="23.0" fill="#f7fbfe"/><rect x="0" y="0" width="19.2" height="23.0" fill="url(#grid)"/><rect x="4.96" y="0" width="1.1" height="2.23" fill="#4a98d4"/><rect x="6.69" y="0" width="1.3" height="4.90" fill="#5ea6da"/><rect x="18.00" y="0" width="1.2" height="8.06" fill="#4a98d4"/><line x1="0" y1="0.5" x2="19.2" y2="0.5" stroke="#5aa2d8" stroke-width="0.9"/><rect x="0" y="0" width="19.2" height="23.0" fill="none" stroke="#70b2e0" stroke-width="0.9"/></g><g transform="translate(251.50,307.40)"><rect x="0" y="0" width="19.2" height="23.0" fill="#f7fbfe"/><rect x="0" y="0" width="19.2" height="23.0" fill="url(#grid)"/><rect x="4.01" y="0" width="1.1" height="2.23" fill="#4a98d4"/><rect x="6.04" y="0" width="1.3" height="4.06" fill="#5ea6da"/><rect x="18.00" y="0" width="1.2" height="8.96" fill="#4a98d4"/><line x1="0" y1="0.5" x2="19.2" y2="0.5" stroke="#5aa2d8" stroke-width="0.9"/><rect x="0" y="0" width="19.2" height="23.0" fill="none" stroke="#70b2e0" stroke-width="0.9"/></g></svg>
<div class="t" style="left:102.9px;top:340.10px;font-size:5.0px;color:#707070;">Utilization</div>
<div class="t" style="left:133.7px;top:340.10px;font-size:5.0px;color:#707070;">Speed</div>
<div class="t" style="left:102.9px;top:361.90px;font-size:5.0px;color:#707070;">Processes</div>
<div class="t" style="left:133px;top:361.90px;font-size:5.0px;color:#707070;">Threads</div>
<div class="t" style="left:159.6px;top:361.90px;font-size:5.0px;color:#707070;">Handles</div>
<div class="t" style="left:102.9px;top:383.40px;font-size:5.0px;color:#707070;">Up time</div>
<div class="t" style="left:102.5px;top:350.20px;font-size:8.8px;color:#1b1b1b;letter-spacing:-0.4px">100%</div>
<div class="t" style="left:133.29999999999998px;top:350.20px;font-size:8.8px;color:#1b1b1b;letter-spacing:-0.4px">3,08 GHz</div>
<div class="t" style="left:102.5px;top:371.90px;font-size:8.8px;color:#1b1b1b;letter-spacing:-0.4px">150</div>
<div class="t" style="left:132.6px;top:371.90px;font-size:8.8px;color:#1b1b1b;letter-spacing:-0.4px">2015</div>
<div class="t" style="left:159.2px;top:371.90px;font-size:8.8px;color:#1b1b1b;letter-spacing:-0.4px">64639</div>
<div class="t" style="left:102.5px;top:393.30px;font-size:8.8px;color:#1b1b1b;letter-spacing:-0.4px">0:00:35:28</div>
<div class="t" style="left:187.6px;top:341.40px;font-size:4.8px;color:#707070;">Base speed:</div>
<div class="t" style="left:235px;top:341.40px;font-size:4.8px;color:#1b1b1b;">2,70 GHz</div>
<div class="t" style="left:187.6px;top:348.91px;font-size:4.8px;color:#707070;">Sockets:</div>
<div class="t" style="left:235px;top:348.91px;font-size:4.8px;color:#1b1b1b;">2</div>
<div class="t" style="left:187.6px;top:356.42px;font-size:4.8px;color:#707070;">Cores:</div>
<div class="t" style="left:235px;top:356.42px;font-size:4.8px;color:#1b1b1b;">16</div>
<div class="t" style="left:187.6px;top:363.93px;font-size:4.8px;color:#707070;">Logical processors:</div>
<div class="t" style="left:235px;top:363.93px;font-size:4.8px;color:#1b1b1b;">32</div>
<div class="t" style="left:187.6px;top:371.44px;font-size:4.8px;color:#707070;">Virtualization:</div>
<div class="t" style="left:235px;top:371.44px;font-size:4.8px;color:#1b1b1b;">Enabled</div>
<div class="t" style="left:187.6px;top:378.95px;font-size:4.8px;color:#707070;">L1 cache:</div>
<div class="t" style="left:235px;top:378.95px;font-size:4.8px;color:#1b1b1b;">1,0 MB</div>
<div class="t" style="left:187.6px;top:386.46px;font-size:4.8px;color:#707070;">L2 cache:</div>
<div class="t" style="left:235px;top:386.46px;font-size:4.8px;color:#1b1b1b;">4,0 MB</div>
<div class="t" style="left:187.6px;top:393.97px;font-size:4.8px;color:#707070;">L3 cache:</div>
<div class="t" style="left:235px;top:393.97px;font-size:4.8px;color:#1b1b1b;">40,0 MB</div>
<svg class="a" style="left:5.5px;top:416.5px" width="9" height="9" viewBox="0 0 9 9"><circle cx="4.5" cy="4.5" r="3.7" fill="none" stroke="#8a8a8a" stroke-width="0.6"/><path d="M2.8 5.2L4.5 3.5L6.2 5.2" fill="none" stroke="#8a8a8a" stroke-width="0.6"/></svg>
<div class="t" style="left:16.9px;top:416.20px;font-size:5.0px;color:#222;">Fewer details</div>
<div class="a" style="left:49.4px;top:418px;width:0.6px;height:5.5px;background:#cfcfcf"></div>
<svg class="a" style="left:52px;top:417px" width="8" height="8" viewBox="0 0 8 8"><circle cx="4" cy="4" r="3.2" fill="#fff" stroke="#555" stroke-width="0.7"/><path d="M2.5 2.3L5.3 5.6" stroke="#d42020" stroke-width="0.9"/></svg>
<div class="t" style="left:61.8px;top:416.20px;font-size:5.0px;color:#1566c0;">Open Resource Monitor</div></body></html>
